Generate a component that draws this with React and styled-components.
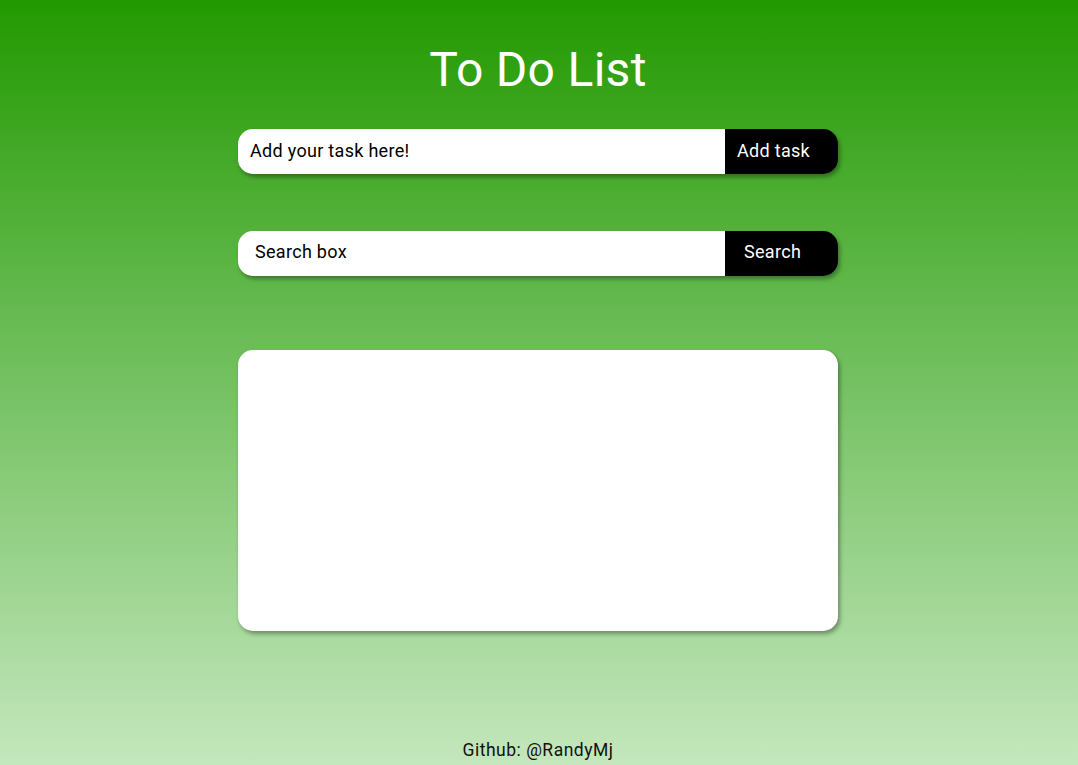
import React from "react";
import styled, { createGlobalStyle } from "styled-components";

const Global = createGlobalStyle`
  html, body { margin: 0; padding: 0; }
  body {
    font-family: Roboto, "Noto Sans", Arial, sans-serif;
    min-height: 765px;
    background: linear-gradient(180deg, #229900 0%, #6cbd58 45%, #c4e7bd 100%);
  }
`;

const Page = styled.div`
  min-height: 765px;
  display: flex;
  flex-direction: column;
  align-items: center;
  box-sizing: border-box;
  padding-right: 2px;
`;

const Title = styled.h1`
  margin: 40px 0 0;
  height: 60px;
  line-height: 60px;
  font-size: 48px;
  font-weight: 400;
  color: #fff;
  letter-spacing: 0.3px;
`;

const Row = styled.form`
  width: 600px;
  height: 45px;
  display: flex;
  margin-top: ${(p) => p.$top}px;
  border-radius: 15px;
  overflow: hidden;
  box-shadow: 2px 3px 4px rgba(0, 0, 0, 0.35);
`;

const Input = styled.input`
  flex: 1;
  min-width: 0;
  border: none;
  outline: none;
  background: #fff;
  padding: 0 0 ${(p) => p.$lift}px ${(p) => p.$pad}px;
  font-family: inherit;
  font-size: 18px;
  letter-spacing: 0.3px;
  color: #000;
  &::placeholder { color: #000; opacity: 1; }
`;

const Button = styled.button`
  width: 113px;
  border: none;
  background: #000;
  color: #fff;
  font-family: inherit;
  font-size: 18px;
  letter-spacing: 0.3px;
  text-align: left;
  padding: 0 0 ${(p) => p.$lift}px ${(p) => p.$pad}px;
  cursor: pointer;
`;

const List = styled.div`
  margin-top: 74px;
  width: 600px;
  height: 281px;
  background: #fff;
  border-radius: 15px;
  box-shadow: 2px 3px 4px rgba(0, 0, 0, 0.35);
`;

const Footer = styled.footer`
  margin-top: auto;
  padding-bottom: 5px;
  font-size: 17.5px;
  letter-spacing: 0.5px;
  color: #111;
`;

export default function App() {
  return (
    <>
      <Global />
      <Page>
        <Title>To Do List</Title>
        <Row $top={29} onSubmit={(e) => e.preventDefault()}>
          <Input $pad={12} $lift={2} placeholder="Add your task here!" />
          <Button $pad={12} $lift={2}>Add task</Button>
        </Row>
        <Row $top={57} onSubmit={(e) => e.preventDefault()}>
          <Input $pad={17} $lift={4} placeholder="Search box" />
          <Button $pad={19} $lift={4}>Search</Button>
        </Row>
        <List />
        <Footer>Github: @RandyMj</Footer>
      </Page>
    </>
  );
}
